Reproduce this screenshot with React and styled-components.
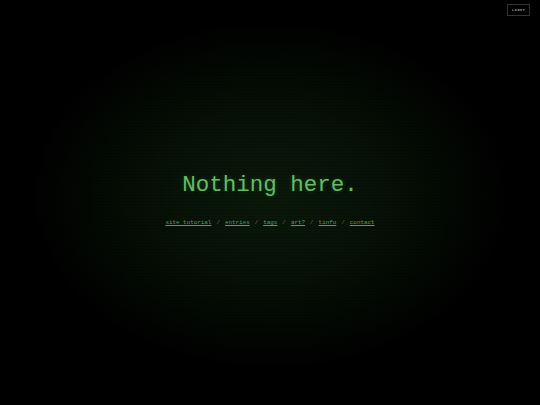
import React from "react";
import styled, { createGlobalStyle } from "styled-components";

const Global = createGlobalStyle`
  html, body {
    margin: 0;
    padding: 0;
    background: #000;
  }
  body {
    font-family: "Liberation Mono", "DejaVu Sans Mono", monospace;
  }
`;

const links = ["site tutorial", "entries", "tags", "art?", "tinfu", "contact"];

function App() {
  return (
    <Screen>
      <Global />
      <ThemeButton>LIGHT</ThemeButton>
      <Center>
        <Title>Nothing here.</Title>
        <Nav>
          {links.map((l, i) => (
            <React.Fragment key={l}>
              {i > 0 && <Sep>/</Sep>}
              <NavLink href="#">{l}</NavLink>
            </React.Fragment>
          ))}
        </Nav>
      </Center>
    </Screen>
  );
}

const Screen = styled.div`
  position: relative;
  width: 540px;
  height: 405px;
  overflow: hidden;
  background:
    repeating-linear-gradient(
      to bottom,
      rgba(0, 0, 0, 0.18) 0px,
      rgba(0, 0, 0, 0.18) 1px,
      transparent 1px,
      transparent 3px
    ),
    radial-gradient(
      ellipse 240px 175px at 270px 195px,
      #0a190a 0%,
      #071307 40%,
      #030803 75%,
      #000 100%
    );
  display: flex;
  align-items: center;
  justify-content: center;
`;

const Center = styled.div`
  display: flex;
  flex-direction: column;
  align-items: center;
  margin-top: -6px;
`;

const Title = styled.h1`
  margin: 0;
  font-family: "Liberation Mono", monospace;
  font-weight: normal;
  font-size: 22.5px;
  line-height: 26px;
  color: #66bb66;
  text-shadow: 0 0 5px rgba(90, 200, 90, 0.25);
`;

const Nav = styled.nav`
  display: flex;
  align-items: center;
  margin-top: 21px;
  font-size: 5.9px;
  line-height: 8px;
`;

const NavLink = styled.a`
  color: #5f9a5f;
  text-decoration: underline;
  text-underline-offset: 1px;
`;

const Sep = styled.span`
  color: #507a50;
  margin: 0 5px;
`;

const ThemeButton = styled.button`
  position: absolute;
  top: 4px;
  right: 10px;
  width: 23px;
  height: 12px;
  padding: 0;
  background: transparent;
  border: 1px solid #333;
  color: #8a8a8a;
  font-family: "Liberation Mono", monospace;
  font-size: 4px;
  font-weight: bold;
  letter-spacing: 0.3px;
`;

export default App;
